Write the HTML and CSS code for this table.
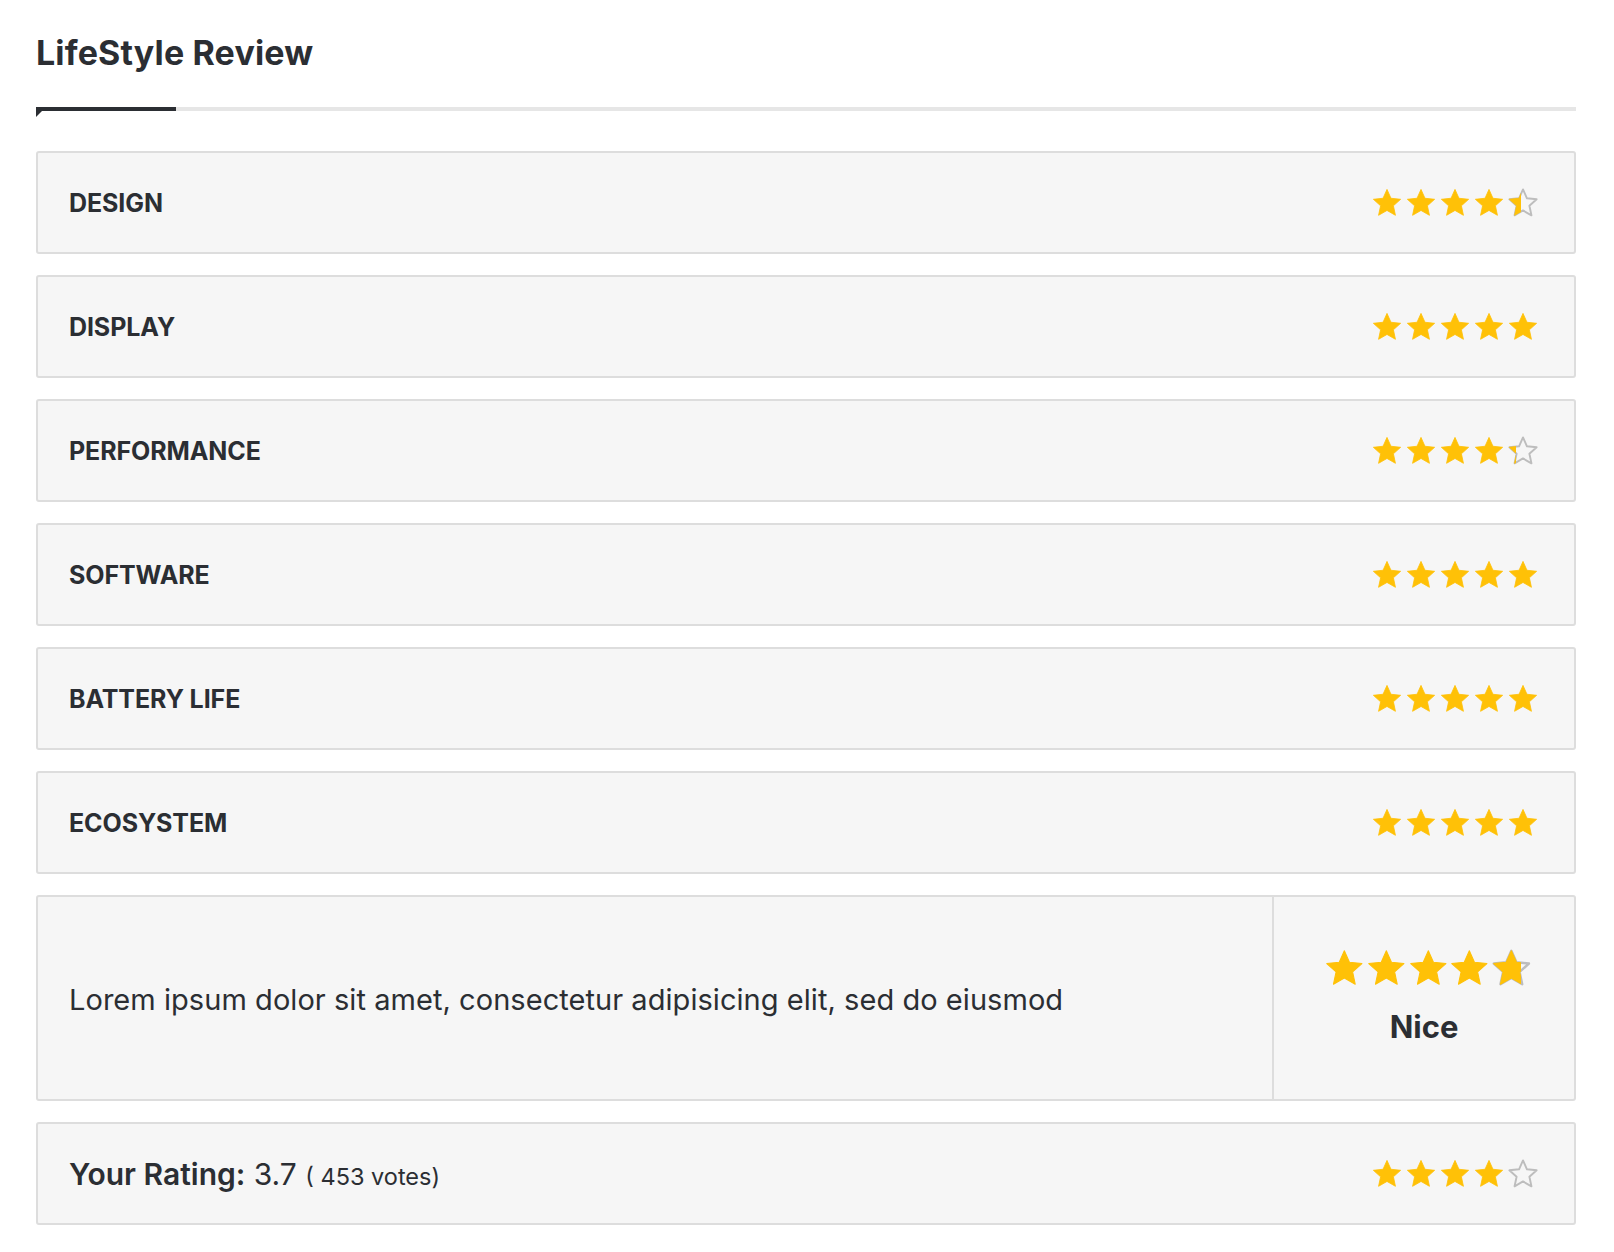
FILE: index.html
```html
<!DOCTYPE html>
<html>
<head>
<meta charset="utf-8">
<link rel="stylesheet" href="styles.css">
</head>
<body>
<svg width="0" height="0" class="defs">
  <defs>
    <path id="star" d="M50 0 L64.52 32.59 L100 36.33 L73.49 60.20 L80.90 95.10 L50 77.27 L19.10 95.10 L26.51 60.20 L0 36.33 L35.48 32.59 Z"/>
  </defs>
</svg>
<div class="review">
  <h2 class="title">LifeStyle Review</h2>
  <div class="rule"><span class="rule-dark"></span></div>

  <div class="list">
    <div class="card row">
      <span class="label">DESIGN</span>
      <div class="stars sm">
        <svg class="st full" viewBox="-5 -5 110 105.1"><use href="#star"/></svg>
        <svg class="st full" viewBox="-5 -5 110 105.1"><use href="#star"/></svg>
        <svg class="st full" viewBox="-5 -5 110 105.1"><use href="#star"/></svg>
        <svg class="st full" viewBox="-5 -5 110 105.1"><use href="#star"/></svg>
        <span class="part"><svg class="st empty" viewBox="-5 -5 110 105.1"><use href="#star"/></svg><span class="clip" style="width:42%"><svg class="st full" viewBox="-5 -5 110 105.1"><use href="#star"/></svg></span></span>
      </div>
    </div>
    <div class="card row">
      <span class="label">DISPLAY</span>
      <div class="stars sm">
        <svg class="st full" viewBox="-5 -5 110 105.1"><use href="#star"/></svg>
        <svg class="st full" viewBox="-5 -5 110 105.1"><use href="#star"/></svg>
        <svg class="st full" viewBox="-5 -5 110 105.1"><use href="#star"/></svg>
        <svg class="st full" viewBox="-5 -5 110 105.1"><use href="#star"/></svg>
        <svg class="st full" viewBox="-5 -5 110 105.1"><use href="#star"/></svg>
      </div>
    </div>
    <div class="card row">
      <span class="label">PERFORMANCE</span>
      <div class="stars sm">
        <svg class="st full" viewBox="-5 -5 110 105.1"><use href="#star"/></svg>
        <svg class="st full" viewBox="-5 -5 110 105.1"><use href="#star"/></svg>
        <svg class="st full" viewBox="-5 -5 110 105.1"><use href="#star"/></svg>
        <svg class="st full" viewBox="-5 -5 110 105.1"><use href="#star"/></svg>
        <span class="part"><svg class="st empty" viewBox="-5 -5 110 105.1"><use href="#star"/></svg><span class="clip" style="width:28%"><svg class="st full" viewBox="-5 -5 110 105.1"><use href="#star"/></svg></span></span>
      </div>
    </div>
    <div class="card row">
      <span class="label">SOFTWARE</span>
      <div class="stars sm">
        <svg class="st full" viewBox="-5 -5 110 105.1"><use href="#star"/></svg>
        <svg class="st full" viewBox="-5 -5 110 105.1"><use href="#star"/></svg>
        <svg class="st full" viewBox="-5 -5 110 105.1"><use href="#star"/></svg>
        <svg class="st full" viewBox="-5 -5 110 105.1"><use href="#star"/></svg>
        <svg class="st full" viewBox="-5 -5 110 105.1"><use href="#star"/></svg>
      </div>
    </div>
    <div class="card row">
      <span class="label">BATTERY LIFE</span>
      <div class="stars sm">
        <svg class="st full" viewBox="-5 -5 110 105.1"><use href="#star"/></svg>
        <svg class="st full" viewBox="-5 -5 110 105.1"><use href="#star"/></svg>
        <svg class="st full" viewBox="-5 -5 110 105.1"><use href="#star"/></svg>
        <svg class="st full" viewBox="-5 -5 110 105.1"><use href="#star"/></svg>
        <svg class="st full" viewBox="-5 -5 110 105.1"><use href="#star"/></svg>
      </div>
    </div>
    <div class="card row">
      <span class="label">ECOSYSTEM</span>
      <div class="stars sm">
        <svg class="st full" viewBox="-5 -5 110 105.1"><use href="#star"/></svg>
        <svg class="st full" viewBox="-5 -5 110 105.1"><use href="#star"/></svg>
        <svg class="st full" viewBox="-5 -5 110 105.1"><use href="#star"/></svg>
        <svg class="st full" viewBox="-5 -5 110 105.1"><use href="#star"/></svg>
        <svg class="st full" viewBox="-5 -5 110 105.1"><use href="#star"/></svg>
      </div>
    </div>

    <div class="card summary">
      <div class="summary-text">Lorem ipsum dolor sit amet, consectetur adipisicing elit, sed do eiusmod</div>
      <div class="summary-score">
        <div class="stars lg">
          <svg class="st full" viewBox="-5 -5 110 105.1"><use href="#star"/></svg>
          <svg class="st full" viewBox="-5 -5 110 105.1"><use href="#star"/></svg>
          <svg class="st full" viewBox="-5 -5 110 105.1"><use href="#star"/></svg>
          <svg class="st full" viewBox="-5 -5 110 105.1"><use href="#star"/></svg>
          <span class="part"><svg class="st empty" viewBox="-5 -5 110 105.1"><use href="#star"/></svg><span class="clip" style="width:74%"><svg class="st full" viewBox="-5 -5 110 105.1"><use href="#star"/></svg></span></span>
        </div>
        <div class="verdict">Nice</div>
      </div>
    </div>

    <div class="card row user">
      <span class="user-rating"><b>Your Rating:</b> 3.7 <small>( 453 votes)</small></span>
      <div class="stars sm">
        <svg class="st full" viewBox="-5 -5 110 105.1"><use href="#star"/></svg>
        <svg class="st full" viewBox="-5 -5 110 105.1"><use href="#star"/></svg>
        <svg class="st full" viewBox="-5 -5 110 105.1"><use href="#star"/></svg>
        <svg class="st full" viewBox="-5 -5 110 105.1"><use href="#star"/></svg>
        <svg class="st empty" viewBox="-5 -5 110 105.1"><use href="#star"/></svg>
      </div>
    </div>
  </div>
</div>
</body>
</html>
```
FILE: styles.css
```css
html, body {
  margin: 0;
  padding: 0;
  background: #ffffff;
}
body {
  font-family: Inter, "Noto Sans", sans-serif;
  color: #2b2e33;
}
.defs {
  position: absolute;
  width: 0;
  height: 0;
  overflow: hidden;
}
.review {
  padding: 33px 38px 40px 36px;
}
.title {
  margin: 0;
  font-family: Inter, sans-serif;
  font-weight: 700;
  font-size: 34px;
  line-height: 40px;
  letter-spacing: 0.15px;
  color: #2b2e33;
}
.rule {
  position: relative;
  margin-top: 34px;
  height: 4px;
  background: #e6e6e6;
}
.rule-dark {
  display: block;
  width: 140px;
  height: 4px;
  background: #2b2e33;
  position: relative;
}
.rule-dark::after {
  content: "";
  position: absolute;
  left: 0;
  top: 4px;
  border-top: 6px solid #2b2e33;
  border-right: 6px solid transparent;
}
.list {
  margin-top: 40px;
  display: flex;
  flex-direction: column;
  gap: 21px;
}
.card {
  box-sizing: border-box;
  background: #f6f6f6;
  border: 2px solid #dddddd;
  border-radius: 3px;
}
.row {
  height: 103px;
  display: flex;
  align-items: center;
  justify-content: space-between;
  padding: 0 36px 0 31px;
}
.label {
  font-family: Inter, sans-serif;
  font-weight: 700;
  font-size: 25px;
  letter-spacing: -0.1px;
  color: #2b2e33;
}
.stars {
  display: flex;
  align-items: center;
}
.stars.sm {
  gap: 4px;
}
.stars.sm .st {
  width: 30px;
  height: 28.7px;
}
.stars.lg {
  gap: 3px;
  padding-left: 8px;
}
.stars.lg .st {
  width: 38.7px;
  height: 37px;
}
.st {
  display: block;
  overflow: visible;
}
.st.full {
  fill: #ffc107;
  stroke: #ffc107;
  stroke-width: 3;
  stroke-linejoin: round;
}
.st.empty {
  fill: none;
  stroke: #bdbdbd;
  stroke-width: 7;
  stroke-linejoin: round;
}
.part {
  position: relative;
  display: block;
}
.part .clip {
  position: absolute;
  left: 0;
  top: 0;
  height: 100%;
  overflow: hidden;
}
.summary {
  height: 206px;
  display: flex;
}
.summary-text {
  flex: 1;
  display: flex;
  align-items: center;
  padding-left: 31px;
  padding-top: 2px;
  font-size: 29px;
  font-weight: 400;
  color: #2b2e33;
  letter-spacing: 0.05px;
}
.summary-score {
  width: 300px;
  border-left: 2px solid #dddddd;
  display: flex;
  flex-direction: column;
  align-items: center;
  justify-content: center;
  gap: 22px;
  padding-bottom: 2px;
}
.verdict {
  font-weight: 700;
  font-size: 31px;
  line-height: 38px;
  color: #2b2e33;
}
.user-rating {
  font-size: 30px;
  font-weight: 400;
  color: #2b2e33;
}
.user-rating b {
  font-weight: 600;
}
.user-rating small {
  font-size: 23.5px;
}
```
